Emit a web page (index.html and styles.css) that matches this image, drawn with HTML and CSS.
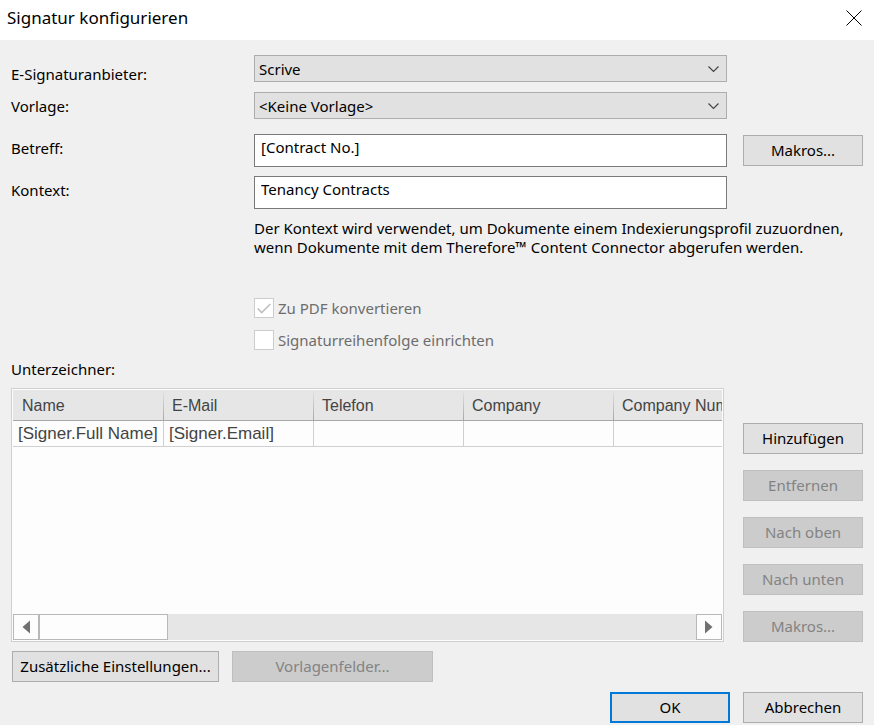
FILE: index.html
```html
<!DOCTYPE html>
<html lang="de">
<head>
    <meta charset="UTF-8">
    <meta name="viewport" content="width=device-width, initial-scale=1.0">
    <title>Signatur konfigurieren</title>
    <link rel="stylesheet" href="styles.css">
</head>
<body>
    <header class="titlebar">
        <h1>Signatur konfigurieren</h1>
        <button type="button" class="close" aria-label="Schließen">
            <svg width="16" height="16" viewBox="0 0 16 16"><path d="M0.5 0.5L15.5 15.5M15.5 0.5L0.5 15.5"/></svg>
        </button>
    </header>

    <form class="dialog">
        <div class="fields">
            <div class="labels">
                <div class="select-labels">
                    <label for="provider">E-Signaturanbieter:</label>
                    <label for="template">Vorlage:</label>
                </div>
                <label for="subject">Betreff:</label>
                <label for="context">Kontext:</label>
            </div>

            <div class="controls">
                <div class="selects">
                    <select id="provider">
                        <option>Scrive</option>
                    </select>
                    <select id="template">
                        <option>&lt;Keine Vorlage&gt;</option>
                    </select>
                </div>
                <div class="inputs">
                    <input type="text" id="subject" value="[Contract No.]">
                    <input type="text" id="context" value="Tenancy Contracts">
                </div>
            </div>

            <div class="macros">
                <button type="button" class="btn">Makros...</button>
            </div>
        </div>

        <div class="options">
            <p class="hint">Der Kontext wird verwendet, um Dokumente einem Indexierungsprofil zuzuordnen, wenn Dokumente mit dem Therefore™ Content Connector abgerufen werden.</p>
            <label class="check"><input type="checkbox" checked disabled>Zu PDF konvertieren</label>
            <label class="check"><input type="checkbox" disabled>Signaturreihenfolge einrichten</label>
        </div>

        <h2 id="signers-title">Unterzeichner:</h2>

        <div class="signers">
            <div class="list">
                <div class="list-view">
                    <table aria-labelledby="signers-title">
                        <thead>
                            <tr>
                                <th>Name</th>
                                <th>E-Mail</th>
                                <th>Telefon</th>
                                <th>Company</th>
                                <th>Company Number</th>
                            </tr>
                        </thead>
                        <tbody>
                            <tr>
                                <td>[Signer.Full Name]</td>
                                <td>[Signer.Email]</td>
                                <td></td>
                                <td></td>
                                <td></td>
                            </tr>
                        </tbody>
                    </table>
                </div>
                <div class="scrollbar">
                    <button type="button" class="arrow" aria-label="Nach links">
                        <svg width="8" height="14" viewBox="0 0 8 14"><path d="M8 0.5V13.5L0.5 7Z"/></svg>
                    </button>
                    <div class="thumb"></div>
                    <button type="button" class="arrow" aria-label="Nach rechts">
                        <svg width="8" height="14" viewBox="0 0 8 14"><path d="M0 0.5V13.5L7.5 7Z"/></svg>
                    </button>
                </div>
            </div>
            <div class="side">
                <button type="button" class="btn">Hinzufügen</button>
                <button type="button" class="btn" disabled>Entfernen</button>
                <button type="button" class="btn" disabled>Nach oben</button>
                <button type="button" class="btn" disabled>Nach unten</button>
                <button type="button" class="btn" disabled>Makros...</button>
            </div>
        </div>

        <div class="extra">
            <button type="button" class="btn">Zusätzliche Einstellungen...</button>
            <button type="button" class="btn" disabled>Vorlagenfelder...</button>
        </div>

        <footer class="actions">
            <button type="submit" class="btn primary">OK</button>
            <button type="button" class="btn">Abbrechen</button>
        </footer>
    </form>
</body>
</html>
```
FILE: styles.css
```css
* {
    box-sizing: border-box;
}
body {
    margin: 0;
    background-color: #f0f0f0;
    color: #000;
    font-family: "Noto Sans", "Open Sans", sans-serif;
    font-size: 15px;
    line-height: 20px;
}
button, input, select {
    font: inherit;
    color: inherit;
    border-radius: 0;
    margin: 0;
}

/* Title bar */
.titlebar {
    display: flex;
    justify-content: space-between;
    align-items: center;
    height: 40px;
    padding: 0 12px 4px 7px;
    background-color: #fff;
}
.titlebar h1 {
    margin: 0;
    font-size: 17px;
    font-weight: normal;
}
.close {
    display: flex;
    padding: 0;
    border: none;
    background: none;
}
.close svg {
    fill: none;
    stroke: #000;
    stroke-width: 1;
}

/* Fields */
.dialog {
    padding: 15px 11px 2px;
}
.fields {
    display: grid;
    grid-template-columns: 243px 1fr 136px;
}
.labels {
    display: flex;
    flex-direction: column;
    gap: 22px;
    padding-top: 9px;
}
.select-labels {
    display: flex;
    flex-direction: column;
    gap: 12px;
}
.controls {
    display: flex;
    flex-direction: column;
    gap: 15px;
}
.selects {
    display: grid;
    gap: 10px;
}
.inputs {
    display: grid;
    gap: 9px;
}
select {
    width: 100%;
    height: 27px;
    padding: 0 28px 0 4px;
    border: 1px solid #adadad;
    appearance: none;
    background: #e1e1e1 url("data:image/svg+xml,%3Csvg xmlns='http://www.w3.org/2000/svg' width='11' height='7'%3E%3Cpath d='M.5 .5l5 5 5-5' fill='none' stroke='%23444' stroke-width='1.2'/%3E%3C/svg%3E") no-repeat right 7px top 10px;
}
.inputs input {
    width: 100%;
    height: 33px;
    padding: 0 6px 8px;
    border: 1px solid #7a7a7a;
    background-color: #fff;
}
.macros {
    display: grid;
    align-content: end;
    padding: 0 0 43px 16px;
}

/* Buttons */
.btn {
    height: 31px;
    padding: 0 4px 2px;
    border: 1px solid #adadad;
    background-color: #e1e1e1;
    white-space: nowrap;
}
.btn:disabled {
    border-color: #bfbfbf;
    background-color: #ccc;
    color: #838383;
}
.btn.primary {
    border: 2px solid #0078d7;
}

/* Hint and check boxes */
.options {
    display: grid;
    gap: 12px;
    margin-left: 243px;
    padding-top: 10px;
}
.hint {
    margin: 0 0 29px;
    line-height: 19px;
}
.check {
    display: flex;
    align-items: center;
    gap: 4px;
    color: #6d6d6d;
}
.check input {
    width: 20px;
    height: 20px;
    border: 1px solid #ccc;
    appearance: none;
    background-color: #fff;
}
.check input:checked {
    background: #fff url("data:image/svg+xml,%3Csvg xmlns='http://www.w3.org/2000/svg' width='14' height='11'%3E%3Cpath d='M.7 5.5l4 4 8.6-8.5' fill='none' stroke='%23bfbfbf' stroke-width='1.6'/%3E%3C/svg%3E") no-repeat center;
}
h2 {
    margin: 9px 0;
    font-size: 15px;
    font-weight: normal;
}

/* Signer list */
.signers {
    display: grid;
    grid-template-columns: minmax(0, 1fr) 120px;
    gap: 19px;
}
.list {
    display: flex;
    flex-direction: column;
    padding: 1px;
    border: 1px solid #d0d0d0;
    background-color: #fdfdfd;
    color: #444;
    font-family: "Liberation Sans", Arial, sans-serif;
    font-size: 16px;
}
.list-view {
    flex: 1;
    overflow: hidden;
}
table {
    width: 770px;
    table-layout: fixed;
    border-collapse: separate;
    border-spacing: 0;
}
th {
    width: 150px;
    height: 31px;
    padding: 2px 0 0 8px;
    border-right: 1px solid;
    border-bottom: 1px solid #a6a6a6;
    border-image: linear-gradient(#e6e6e6, #a6a6a6) 1;
    background-color: #e6e6e6;
    font-weight: normal;
    text-align: left;
    white-space: nowrap;
}
th:first-child {
    width: 151px;
    padding-left: 9px;
}
th:last-child {
    width: auto;
}
td {
    height: 26px;
    padding: 0 0 0 5px;
    border-right: 1px solid #d0d0d0;
    border-bottom: 1px solid #d0d0d0;
    font-size: 17px;
    white-space: nowrap;
}
.scrollbar {
    display: flex;
    height: 26px;
    background-color: #e6e6e6;
}
.arrow {
    display: flex;
    justify-content: center;
    align-items: center;
    width: 26px;
    padding: 0;
    border: 1px solid #b8b8b8;
    background-color: #fdfdfd;
}
.arrow svg {
    fill: #707070;
}
.arrow:last-child {
    margin-left: auto;
}
.thumb {
    width: 129px;
    border: 1px solid #b8b8b8;
    background-color: #fdfdfd;
}
.side {
    display: grid;
    gap: 16px;
    padding-top: 35px;
}

/* Bottom buttons */
.extra {
    display: flex;
    gap: 13px;
    padding: 9px 0 10px 1px;
}
.extra .btn {
    flex: 0 0 201px;
}
.extra .btn:first-child {
    flex-basis: 207px;
}
.actions {
    display: flex;
    justify-content: flex-end;
    gap: 13px;
}
.actions .btn {
    width: 120px;
}
```
